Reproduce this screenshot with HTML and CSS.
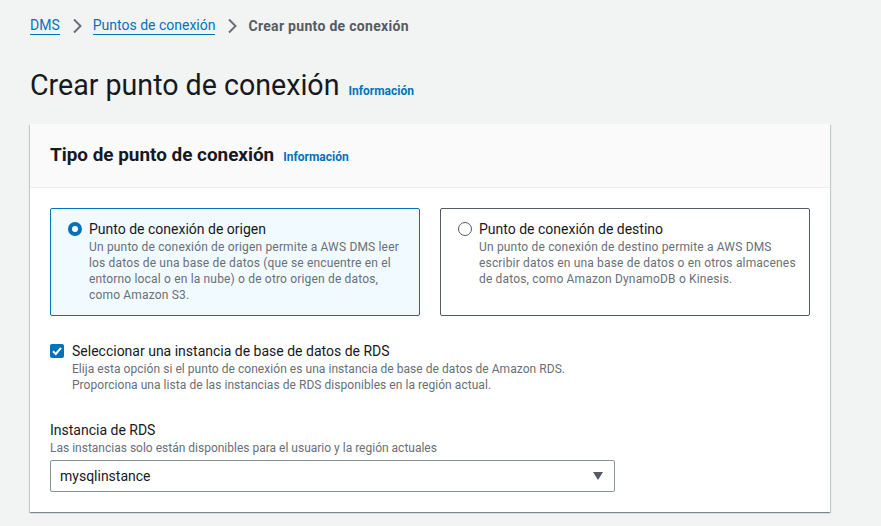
FILE: index.html
```html
<!DOCTYPE html>
<html lang="es">
<head>
<meta charset="utf-8">
<link rel="stylesheet" href="styles.css">
</head>
<body>
<nav class="crumbs">
  <a class="crumb-link" href="#">DMS</a>
  <svg class="chev" width="16" height="16" viewBox="0 0 16 16"><path d="M5 1.5 11.5 8 5 14.5" fill="none" stroke="#687078" stroke-width="2"/></svg>
  <a class="crumb-link" href="#">Puntos de conexión</a>
  <svg class="chev" width="16" height="16" viewBox="0 0 16 16"><path d="M5 1.5 11.5 8 5 14.5" fill="none" stroke="#687078" stroke-width="2"/></svg>
  <span class="crumb-current">Crear punto de conexión</span>
</nav>

<header class="page-head">
  <h1>Crear punto de conexión</h1>
  <a class="info" href="#">Información</a>
</header>

<section class="panel">
  <div class="panel-head">
    <h2>Tipo de punto de conexión</h2>
    <a class="info" href="#">Información</a>
  </div>
  <div class="panel-body">
    <div class="tiles">
      <div class="tile selected">
        <span class="radio on"></span>
        <div class="tile-text">
          <div class="tile-label">Punto de conexión de origen</div>
          <div class="desc">Un punto de conexión de origen permite a AWS DMS leer<br>los datos de una base de datos (que se encuentre en el<br>entorno local o en la nube) o de otro origen de datos,<br>como Amazon S3.</div>
        </div>
      </div>
      <div class="tile">
        <span class="radio"></span>
        <div class="tile-text">
          <div class="tile-label">Punto de conexión de destino</div>
          <div class="desc">Un punto de conexión de destino permite a AWS DMS<br>escribir datos en una base de datos o en otros almacenes<br>de datos, como Amazon DynamoDB o Kinesis.</div>
        </div>
      </div>
    </div>

    <div class="check-row">
      <span class="checkbox"><svg width="14" height="14" viewBox="0 0 14 14"><path d="M3 7.2 5.8 10 11 3.8" fill="none" stroke="#fff" stroke-width="2"/></svg></span>
      <div>
        <div class="check-label">Seleccionar una instancia de base de datos de RDS</div>
        <div class="desc">Elija esta opción si el punto de conexión es una instancia de base de datos de Amazon RDS.<br>Proporciona una lista de las instancias de RDS disponibles en la región actual.</div>
      </div>
    </div>

    <div class="field">
      <div class="field-label">Instancia de RDS</div>
      <div class="desc">Las instancias solo están disponibles para el usuario y la región actuales</div>
      <div class="select">
        <span>mysqlinstance</span>
        <svg width="12" height="10" viewBox="0 0 12 10"><path d="M1 1h10L6 9z" fill="#545b64"/></svg>
      </div>
    </div>
  </div>
</section>
</body>
</html>
```

FILE: styles.css
```css
* { box-sizing: border-box; }
html, body { margin: 0; padding: 0; }
body {
  background: #f2f3f3;
  font-family: Roboto, "Noto Sans", Arial, sans-serif;
  color: #16191f;
  padding: 15px 30px 0 30px;
  width: 881px;
  height: 526px;
  overflow: hidden;
}
.crumbs {
  display: flex;
  align-items: center;
  gap: 7px;
  font-size: 14px;
  height: 22px;
}
.chev { margin: 0 1px 0 2px; }
.crumb-link {
  color: #0073bb;
  text-decoration: none;
  border-bottom: 1px solid #0073bb;
  line-height: 17px;
}
.crumb-current {
  color: #545b64;
  font-weight: 700;
  letter-spacing: 0.3px;
}
.page-head {
  display: flex;
  align-items: baseline;
  gap: 9px;
  margin-top: 30px;
  height: 40px;
}
.page-head h1 {
  margin: 0;
  font-size: 28.6px;
  font-weight: 400;
  line-height: 36px;
}
.info {
  color: #0073bb;
  font-size: 12px;
  font-weight: 700;
  text-decoration: none;
}
.panel {
  margin-top: 17px;
  width: 800px;
  background: #fff;
  box-shadow: 0 1px 1px 0 rgba(0,28,36,0.3), 1px 1px 1px 0 rgba(0,28,36,0.15), -1px 1px 1px 0 rgba(0,28,36,0.15);
}
.panel-head {
  display: flex;
  align-items: baseline;
  gap: 9px;
  background: #fafafa;
  border-bottom: 1px solid #eaeded;
  padding: 19px 20px 0 20px;
  height: 64px;
}
.panel-head h2 {
  margin: 0;
  font-size: 18.9px;
  font-weight: 700;
  line-height: 24px;
}
.panel-body {
  padding: 20px 20px 20px 20px;
}
.tiles {
  display: grid;
  grid-template-columns: 370px 370px;
  gap: 20px;
}
.tile {
  display: flex;
  gap: 8px;
  border: 1px solid #545b64;
  border-radius: 2px;
  padding: 11px 6px 12px 17px;
  height: 108px;
}
.tile.selected {
  border-color: #0073bb;
  background: #f1faff;
}
.radio {
  flex: none;
  width: 14px;
  height: 14px;
  border-radius: 50%;
  border: 1px solid #545b64;
  background: #fff;
  margin-top: 2px;
}
.radio.on {
  border: 4px solid #0073bb;
}
.tile-text { margin-left: -1px; }
.tile-label, .check-label, .field-label {
  font-size: 14px;
  line-height: 18px;
}
.desc {
  font-size: 12px;
  line-height: 16px;
  color: #687078;
}
.tile .desc { margin-top: 1px; letter-spacing: 0.17px; white-space: nowrap; }
.check-row {
  display: flex;
  gap: 8px;
  margin-top: 26px;
}
.checkbox {
  flex: none;
  width: 14px;
  height: 14px;
  background: #0073bb;
  border-radius: 2px;
  margin-top: 2px;
  display: flex;
}
.check-row .desc { margin-top: 1px; letter-spacing: 0.05px; }
.field { margin-top: 28px; }
.field-label { margin-bottom: 1px; }
.select {
  margin-top: 4px;
  width: 565px;
  height: 32px;
  border: 1px solid #879596;
  border-radius: 2px;
  display: flex;
  align-items: center;
  justify-content: space-between;
  padding: 0 10px 0 9px;
  font-size: 14px;
}
```
